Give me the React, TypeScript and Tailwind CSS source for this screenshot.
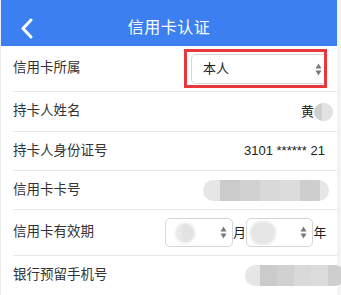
import React from 'react';

const SortArrows: React.FC = () => (
  <svg width="7" height="13" viewBox="0 0 7 13" className="shrink-0">
    <path d="M3.5 0.5 L6.5 5.5 L0.5 5.5 Z" fill="#7a7a7a" />
    <path d="M3.5 12.5 L6.5 7.5 L0.5 7.5 Z" fill="#7a7a7a" />
  </svg>
);

// blurred placeholder bar (masked data in the screenshot)
const BlurBar: React.FC<{ className?: string }> = ({ className }) => (
  <div className={`flex h-[21px] rounded-full overflow-hidden blur-[0.5px] ${className ?? ''}`}>
    <div className="w-[17px] bg-[#e6e6e6]" />
    <div className="w-[20px] bg-[#cbcbcb]" />
    <div className="w-[20px] bg-[#d1d1d1]" />
    <div className="w-[20px] bg-[#d9d9d9]" />
    <div className="w-[20px] bg-[#dcdcdc]" />
    <div className="w-[20px] bg-[#cecece]" />
    <div className="flex-1 bg-[#e6e6e6]" />
  </div>
);

const App: React.FC = () => {
  return (
    <div className="w-[341px] h-[295px] overflow-hidden flex bg-[#f3f3f3] font-['Liberation_Sans','Noto_Sans_CJK_SC',sans-serif]">
      <div className="w-[337px] bg-white border-l border-[#ececec] shrink-0">
        {/* header */}
        <div className="h-[46px] bg-[#3c7ff0] grid grid-cols-[1fr_auto_1fr] items-center pt-[10px] text-white">
          <div className="pl-[19px]">
            <svg width="14" height="21" viewBox="0 0 14 21">
              <path d="M11 2 L3 10.5 L11 19" fill="none" stroke="white" strokeWidth="3" strokeLinecap="round" strokeLinejoin="round" />
            </svg>
          </div>
          <div className="text-[16px] tracking-[0.5px]">信用卡认证</div>
          <div />
        </div>

        <div className="text-[13.5px] text-[#333]">
          {/* 信用卡所属 */}
          <div className="ml-3 h-[46px] border-b border-[#e8e8e8] flex items-center justify-between pr-[10px]">
            <span>信用卡所属</span>
            <div className="w-[143px] h-[39px] border-[3px] border-[#e8383d] pl-[4px] pt-[2px] pb-[1px] overflow-hidden">
              <div className="h-full w-[140px] border border-[#d6d6d6] rounded-[5px] flex items-center justify-between pl-[11px] pr-[8px] text-[13px] text-[#222]">
                <span>本人</span>
                <SortArrows />
              </div>
            </div>
          </div>

          {/* 持卡人姓名 */}
          <div className="ml-3 h-[40px] border-b border-[#e8e8e8] flex items-center justify-between pr-[4px]">
            <span>持卡人姓名</span>
            <div className="flex items-center">
              <span className="text-[13px] text-[#222]">黄</span>
              <div className="w-[19px] h-[18px] rounded-full bg-[linear-gradient(90deg,#cfcfcf_0%,#cfcfcf_40%,#e2e2e2_40%)] blur-[0.5px]" />
            </div>
          </div>

          {/* 持卡人身份证号 */}
          <div className="ml-3 h-[39px] border-b border-[#e8e8e8] flex items-center justify-between pr-[12px]">
            <span>持卡人身份证号</span>
            <span className="text-[13px] text-[#222]">3101 ****** 21</span>
          </div>

          {/* 信用卡卡号 */}
          <div className="ml-3 h-[39px] border-b border-[#e8e8e8] flex items-center justify-between pr-[8px]">
            <span>信用卡卡号</span>
            <BlurBar className="w-[126px]" />
          </div>

          {/* 信用卡有效期 */}
          <div className="ml-3 h-[46px] border-b border-[#e8e8e8] flex items-center justify-between pr-[10px]">
            <span>信用卡有效期</span>
            <div className="flex items-center text-[13px] text-[#222]">
              <div className="w-[68px] h-[29px] border border-[#d6d6d6] rounded-[5px] flex items-center justify-between pl-[9px] pr-[5px]">
                <div className="w-[20px] h-[20px] rounded-full bg-[linear-gradient(90deg,#e9e9e9_0%,#e9e9e9_35%,#e3e3e3_35%)] blur-[1px]" />
                <SortArrows />
              </div>
              <span className="w-[13px] text-center">月</span>
              <div className="w-[67px] h-[29px] border border-[#d6d6d6] rounded-[5px] flex items-center justify-between pl-[3px] pr-[5px]">
                <div className="w-[26px] h-[24px] rounded-full bg-[#e6e6e6] blur-[1px]" />
                <SortArrows />
              </div>
              <span className="w-[14px] text-center">年</span>
            </div>
          </div>

          {/* 银行预留手机号 */}
          <div className="ml-3 h-[39px] flex items-center justify-between">
            <span>银行预留手机号</span>
            <BlurBar className="w-[100px] -mr-[8px]" />
          </div>
        </div>
      </div>
    </div>
  );
};

export default App;
